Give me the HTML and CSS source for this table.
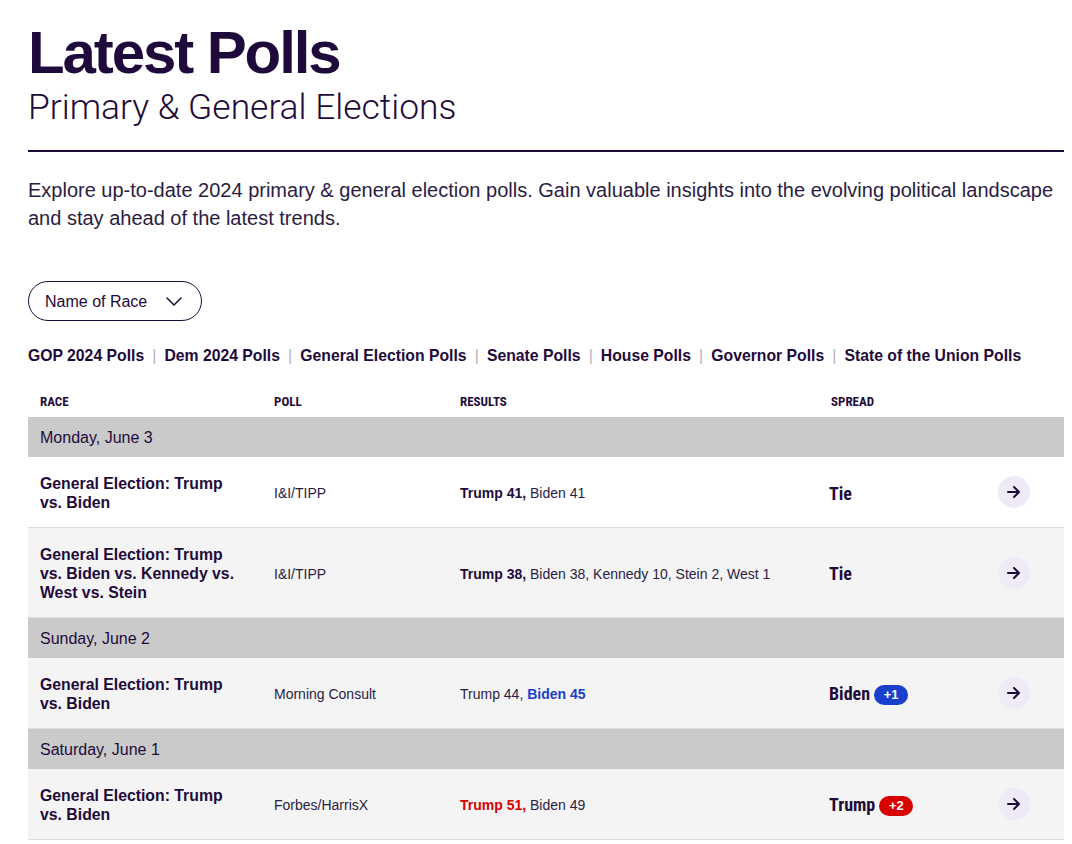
FILE: index.html
```html
<!DOCTYPE html>
<html lang="en">
<head>
<meta charset="utf-8">
<title>Latest Polls</title>
<link rel="stylesheet" href="styles.css">
</head>
<body>
<main class="page">
  <header class="intro">
    <h1 class="title">Latest Polls</h1>
    <h2 class="subtitle">Primary &amp; General Elections</h2>
  </header>
  <hr class="rule">
  <p class="lede">Explore up-to-date 2024 primary &amp; general election polls. Gain valuable insights into the evolving political landscape and stay ahead of the latest trends.</p>

  <button class="race-select" type="button">
    <span>Name of Race</span>
    <svg class="chev" width="16" height="9" viewBox="0 0 16 9" aria-hidden="true"><path d="M1 1l7 7 7-7" fill="none" stroke="#1f0b3b" stroke-width="1.5" stroke-linecap="round" stroke-linejoin="round"/></svg>
  </button>

  <nav class="poll-links"><a href="#">GOP 2024 Polls</a><span class="sep">|</span><a href="#">Dem 2024 Polls</a><span class="sep">|</span><a href="#">General Election Polls</a><span class="sep">|</span><a href="#">Senate Polls</a><span class="sep">|</span><a href="#">House Polls</a><span class="sep">|</span><a href="#">Governor Polls</a><span class="sep">|</span><a href="#">State of the Union Polls</a></nav>

  <table class="polls">
    <colgroup>
      <col class="c-race"><col class="c-poll"><col class="c-results"><col class="c-spread"><col class="c-go">
    </colgroup>
    <thead>
      <tr class="head">
        <th>Race</th><th>Poll</th><th>Results</th><th>Spread</th><th></th>
      </tr>
    </thead>
    <tbody>
      <tr class="date"><td colspan="5">Monday, June 3</td></tr>
      <tr class="row row-white">
        <td class="race">General Election: Trump vs. Biden</td>
        <td class="poll">I&amp;I/TIPP</td>
        <td class="results"><b>Trump 41,</b> Biden 41</td>
        <td class="spread">Tie</td>
        <td class="go"><span class="go-btn"><svg width="14" height="12" viewBox="0 0 14 12" aria-hidden="true"><path d="M1 6h11M7 1l5 5-5 5" fill="none" stroke="#1f0b3b" stroke-width="2" stroke-linecap="round" stroke-linejoin="round"/></svg></span></td>
      </tr>
      <tr class="row">
        <td class="race">General Election: Trump vs. Biden vs. Kennedy vs. West vs. Stein</td>
        <td class="poll">I&amp;I/TIPP</td>
        <td class="results"><b>Trump 38,</b> Biden 38, Kennedy 10, Stein 2, West 1</td>
        <td class="spread">Tie</td>
        <td class="go"><span class="go-btn"><svg width="14" height="12" viewBox="0 0 14 12" aria-hidden="true"><path d="M1 6h11M7 1l5 5-5 5" fill="none" stroke="#1f0b3b" stroke-width="2" stroke-linecap="round" stroke-linejoin="round"/></svg></span></td>
      </tr>
      <tr class="date"><td colspan="5">Sunday, June 2</td></tr>
      <tr class="row">
        <td class="race">General Election: Trump vs. Biden</td>
        <td class="poll">Morning Consult</td>
        <td class="results">Trump 44, <b class="dem">Biden 45</b></td>
        <td class="spread">Biden <span class="badge badge-dem">+1</span></td>
        <td class="go"><span class="go-btn"><svg width="14" height="12" viewBox="0 0 14 12" aria-hidden="true"><path d="M1 6h11M7 1l5 5-5 5" fill="none" stroke="#1f0b3b" stroke-width="2" stroke-linecap="round" stroke-linejoin="round"/></svg></span></td>
      </tr>
      <tr class="date"><td colspan="5">Saturday, June 1</td></tr>
      <tr class="row">
        <td class="race">General Election: Trump vs. Biden</td>
        <td class="poll">Forbes/HarrisX</td>
        <td class="results"><b class="gop">Trump 51,</b> Biden 49</td>
        <td class="spread">Trump <span class="badge badge-gop">+2</span></td>
        <td class="go"><span class="go-btn"><svg width="14" height="12" viewBox="0 0 14 12" aria-hidden="true"><path d="M1 6h11M7 1l5 5-5 5" fill="none" stroke="#1f0b3b" stroke-width="2" stroke-linecap="round" stroke-linejoin="round"/></svg></span></td>
      </tr>
    </tbody>
  </table>
</main>
</body>
</html>
```

FILE: styles.css
```css
html, body {
  margin: 0;
  padding: 0;
  background: #ffffff;
}

body {
  font-family: "Liberation Sans", Arial, sans-serif;
  color: #1f0b3b;
}

.page {
  padding: 23px 8px 0 28px;
}

.title {
  margin: 0;
  font-size: 60px;
  line-height: 60px;
  font-weight: 700;
  letter-spacing: -2.1px;
  color: #1f0b3b;
}

.subtitle {
  margin: 4px 0 0;
  font-family: Roboto, "Liberation Sans", sans-serif;
  font-weight: 300;
  font-size: 35.4px;
  line-height: 40px;
  color: #1f0b3b;
}

.rule {
  margin: 23px 0 0;
  border: 0;
  height: 2px;
  background: #1f0b3b;
}

.lede {
  margin: 24px 0 0;
  font-size: 20px;
  line-height: 28px;
  color: #2b1c44;
}

.race-select {
  margin-top: 49px;
  display: flex;
  align-items: center;
  justify-content: space-between;
  width: 174px;
  height: 40px;
  padding: 1px 19px 0 16px;
  border: 1px solid #1f0b3b;
  border-radius: 20px;
  background: #ffffff;
  font-family: "Liberation Sans", Arial, sans-serif;
  font-size: 16px;
  color: #1f0b3b;
  box-sizing: border-box;
}

.poll-links {
  margin-top: 25px;
  font-size: 15.75px;
  line-height: 20px;
  font-weight: 700;
  white-space: nowrap;
}

.poll-links a {
  color: #1f0b3b;
  text-decoration: none;
}

.poll-links .sep {
  color: #b5b0bd;
  font-weight: 400;
  margin: 0 8.1px;
}

.polls {
  margin-top: 19px;
  width: 1036px;
  table-layout: fixed;
  border-collapse: collapse;
}

.c-race { width: 234px; }
.c-poll { width: 186px; }
.c-results { width: 371px; }
.c-spread { width: 149px; }
.c-go { width: 96px; }

.head th {
  height: 32px;
  padding: 0 12px;
  text-align: left;
  vertical-align: middle;
  font-family: "Liberation Sans Narrow", "Roboto Condensed", "DejaVu Sans Condensed", sans-serif;
  font-stretch: condensed;
  font-size: 13px;
  font-weight: 700;
  text-transform: uppercase;
  color: #1f0b3b;
}

.date td {
  height: 39px;
  padding: 1px 12px 0;
  background: #cacaca;
  font-size: 16px;
  color: #1f0b3b;
}

.row td {
  background: #f4f4f4;
  border-bottom: 1px solid #dcdcdc;
  vertical-align: middle;
  padding: 17px 12px 15px;
}

.row-white td {
  background: #ffffff;
}

.row .race {
  padding-right: 20px;
  font-size: 15.8px;
  line-height: 19px;
  font-weight: 700;
  color: #1f0b3b;
}

.row .poll {
  font-size: 14px;
  color: #2b1c44;
}

.row .results {
  font-size: 14px;
  color: #2b1c44;
}

.results b {
  color: #1f0b3b;
}

.results b.dem {
  color: #1a3fcc;
}

.results b.gop {
  color: #d90000;
}

.row .spread {
  padding-left: 10px;
  font-family: "Liberation Sans Narrow", "Roboto Condensed", "DejaVu Sans Condensed", sans-serif;
  font-stretch: condensed;
  font-size: 18px;
  font-weight: 700;
  color: #1f0b3b;
  white-space: nowrap;
}

.badge {
  display: inline-block;
  vertical-align: 1px;
  min-width: 34px;
  height: 20px;
  line-height: 20px;
  padding: 0 6px;
  box-sizing: border-box;
  border-radius: 10px;
  text-align: center;
  font-family: "Liberation Sans", Arial, sans-serif;
  font-size: 13px;
  font-weight: 700;
  color: #ffffff;
}

.badge-dem { background: #1a3fcc; }
.badge-gop { background: #d90000; }

.row .go {
  padding: 0 4px 0 0;
  text-align: center;
}

.go-btn {
  display: inline-flex;
  align-items: center;
  justify-content: center;
  width: 32px;
  height: 32px;
  border-radius: 50%;
  background: #eeebf7;
}
```
